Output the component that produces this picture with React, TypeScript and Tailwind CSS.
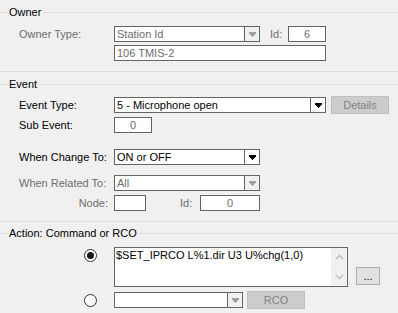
import React from 'react';

const Line = () => <div className="h-px bg-[#dcdcdc]" />;

const GroupHeader = ({ title }: { title: string }) => (
  <div className="flex items-center h-[13px]">
    <div className="w-[7px] h-px bg-[#dcdcdc]" />
    <span className="px-[2px] leading-[13px]">{title}</span>
    <div className="flex-1 h-px bg-[#dcdcdc]" />
  </div>
);

const Arrow = ({ disabled }: { disabled?: boolean }) => (
  <svg width="7" height="5" viewBox="0 0 7 5" className="block">
    <g fill={disabled ? '#a0a0a0' : '#000'}>
      <rect x="0" y="0" width="7" height="1" />
      <rect x="0" y="1" width="7" height="1" />
      <rect x="1" y="2" width="5" height="1" />
      <rect x="2" y="3" width="3" height="1" />
      <rect x="3" y="4" width="1" height="1" />
    </g>
  </svg>
);

const Combo = ({ w, text, disabled }: { w: string; text: string; disabled?: boolean }) => (
  <div className={`${w} h-[16px] flex border border-[#646464] bg-white box-border`}>
    <div className={`flex-1 pl-[2px] leading-[14px] truncate ${disabled ? 'text-[#6d6d6d]' : 'text-black'}`}>{text}</div>
    <div className={`w-[15px] border-l border-[#646464] flex items-center justify-center ${disabled ? 'bg-[#f0f0f0]' : 'bg-white'}`}>
      <Arrow disabled={disabled} />
    </div>
  </div>
);

const Box = ({ w, text, center, disabled }: { w: string; text?: string; center?: boolean; disabled?: boolean }) => (
  <div
    className={`${w} h-[16px] border border-[#646464] bg-white leading-[14px] ${center ? 'text-center' : 'pl-[2px]'} ${disabled ? 'text-[#6d6d6d]' : 'text-[#6d6d6d]'}`}
  >
    {text}
  </div>
);

const Button = ({ w, label, disabled }: { w: string; label: string; disabled?: boolean }) => (
  <div
    className={`${w} h-[18px] flex items-center justify-center border ${disabled ? 'bg-[#cccccc] border-[#bfbfbf] text-[#838383]' : 'bg-[#e1e1e1] border-[#adadad] text-black'}`}
  >
    {label}
  </div>
);

const Radio = ({ checked }: { checked?: boolean }) => (
  <div className="w-[13px] h-[13px] rounded-full border border-[#333333] bg-white flex items-center justify-center shrink-0">
    {checked && <div className="w-[7px] h-[7px] rounded-full bg-[#1a1a1a]" />}
  </div>
);

const Chevron = ({ up }: { up?: boolean }) => (
  <svg width="9" height="6" viewBox="0 0 9 6" className="block">
    <polyline
      points={up ? '1,5 4.5,1.5 8,5' : '1,1 4.5,4.5 8,1'}
      fill="none"
      stroke="#c2c2c2"
      strokeWidth="1.6"
    />
  </svg>
);

export default function App() {
  return (
    <div className="w-[398px] h-[313px] overflow-hidden bg-[#f0f0f0] text-[11px] text-black font-['Liberation_Sans',Arial,sans-serif]">
      {/* Owner */}
      <div className="pt-[6px]">
        <GroupHeader title="Owner" />
        <div className="mt-[7px] pl-[19px] flex items-center h-[16px] text-[#6d6d6d]">
          <span className="w-[95px] shrink-0">Owner Type:</span>
          <Combo w="w-[146px]" text="Station Id" disabled />
          <span className="ml-[10px] w-[18px]">Id:</span>
          <Box w="w-[38px]" text="6" center disabled />
        </div>
        <div className="mt-[3px] pl-[114px] flex h-[16px]">
          <Box w="w-[212px]" text="106 TMIS-2" disabled />
        </div>
        <div className="mt-[10px]">
          <Line />
        </div>
      </div>

      {/* Event */}
      <div className="pt-[6px]">
        <GroupHeader title="Event" />
        <div className="mt-[5px] pl-[19px] flex items-center h-[18px]">
          <span className="w-[95px] shrink-0">Event Type:</span>
          <Combo w="w-[212px]" text="5 - Microphone open" />
          <div className="ml-[5px]">
            <Button w="w-[58px]" label="Details" disabled />
          </div>
        </div>
        <div className="mt-[3px] pl-[19px] flex items-center h-[16px]">
          <span className="w-[95px] shrink-0">Sub Event:</span>
          <Box w="w-[38px]" text="0" center />
        </div>
        <div className="mt-[16px] pl-[19px] flex items-center h-[16px]">
          <span className="w-[95px] shrink-0">When Change To:</span>
          <Combo w="w-[146px]" text="ON or OFF" />
        </div>
        <div className="mt-[10px] pl-[19px] flex items-center h-[16px] text-[#6d6d6d]">
          <span className="w-[95px] shrink-0">When Related To:</span>
          <Combo w="w-[146px]" text="All" disabled />
        </div>
        <div className="mt-[4px] pl-[19px] flex items-center h-[16px] text-[#6d6d6d]">
          <span className="w-[89px] shrink-0 text-right mr-[6px]">Node:</span>
          <Box w="w-[32px]" />
          <span className="ml-[34px] w-[20px]">Id:</span>
          <Box w="w-[60px]" text="0" center />
        </div>
        <div className="mt-[10px]">
          <Line />
        </div>
      </div>

      {/* Action */}
      <div className="pt-[5px]">
        <GroupHeader title="Action: Command or RCO" />
        <div className="mt-[7px] pl-[84px] flex h-[40px]">
          <div className="mt-[2px]">
            <Radio checked />
          </div>
          <div className="ml-[17px] w-[234px] h-[40px] border border-[#646464] bg-white flex">
            <div className="flex-1 pl-[1px] leading-[14px]">$SET_IPRCO L%1.dir U3 U%chg(1,0)</div>
            <div className="w-[16px] bg-[#f0f0f0] flex flex-col justify-between py-[6px] items-center">
              <Chevron up />
              <Chevron />
            </div>
          </div>
          <div className="ml-[8px] self-end mb-[2px]">
            <Button w="w-[24px]" label="..." />
          </div>
        </div>
        <div className="mt-[4px] pl-[84px] flex items-center h-[18px]">
          <Radio />
          <div className="ml-[17px]">
            <Combo w="w-[129px]" text="" disabled />
          </div>
          <div className="ml-[4px]">
            <Button w="w-[58px]" label="RCO" disabled />
          </div>
        </div>
      </div>
    </div>
  );
}
